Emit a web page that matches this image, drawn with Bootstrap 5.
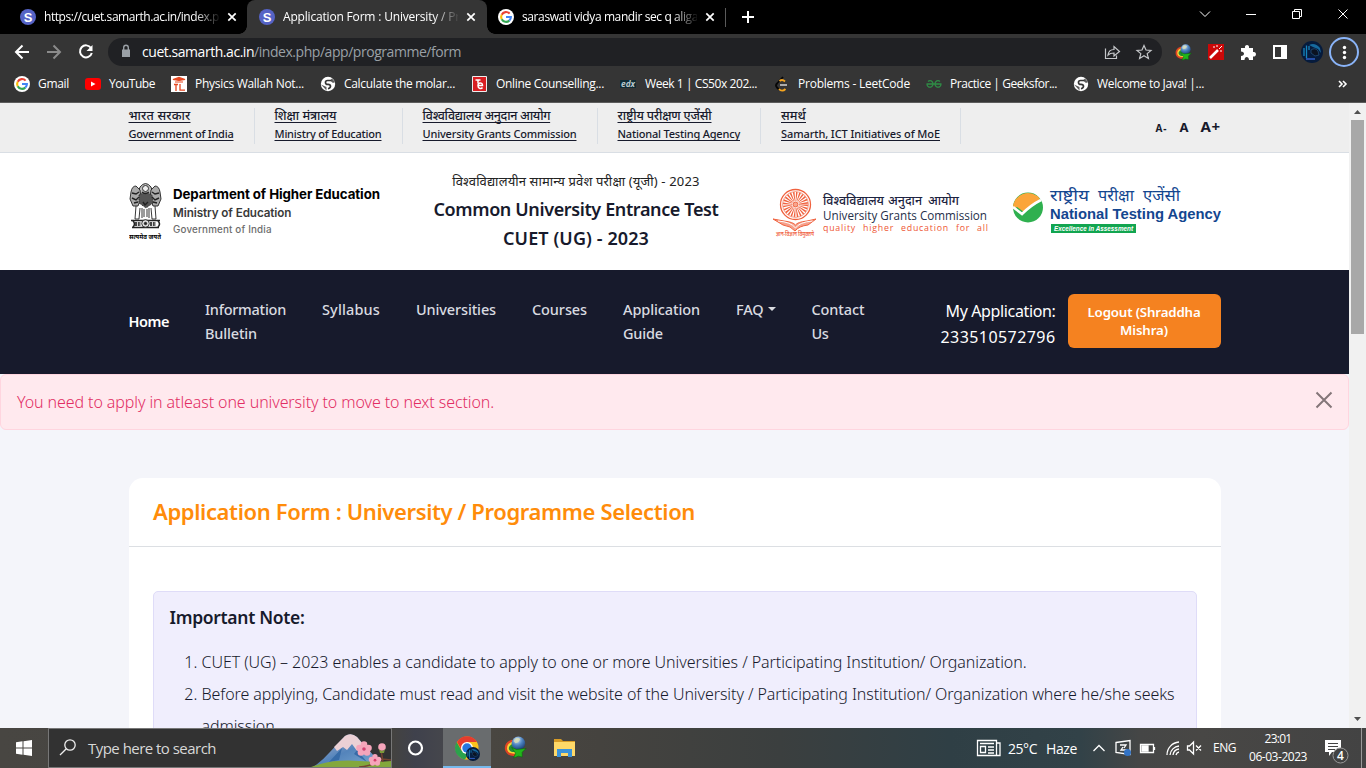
<!DOCTYPE html>
<html lang="en">
<head>
<meta charset="utf-8">
<meta name="viewport" content="width=device-width, initial-scale=1">
<title>Application Form : University / Programme Selection</title>
<link rel="stylesheet" href="https://cdn.jsdelivr.net/npm/bootstrap@5.3.0/dist/css/bootstrap.min.css">
<style>
html,body{height:100%;overflow:hidden}
body{width:1366px;height:768px;font-family:"Noto Sans","Open Sans",sans-serif;color:#171a2c;background:#f4f5fa}
svg{display:block;flex:none}
[data-w]{white-space:nowrap;display:inline-block}
/* browser window */
.win{font-family:"Open Sans","Noto Sans",sans-serif;color:#fff;font-size:12px}
.tabs{height:34px;background:#000;padding-left:8px}
.tab{width:239px;height:34px;padding:0 10px 0 12px}
.tab.on{width:240px;background:#353535;border-radius:8px 8px 0 0;position:relative}
.tab.last{width:235px;margin-left:3px;padding:0 0 0 8px}
.tab.on::before,.tab.on::after{content:"";position:absolute;bottom:0;width:8px;height:8px;background:radial-gradient(circle at 0 0,#000 7.5px,#353535 8px)}
.tab.on::before{left:-8px}
.tab.on::after{right:-8px;background:radial-gradient(circle at 100% 0,#000 7.5px,#353535 8px)}
.tab-title{width:175px;margin-left:8px;white-space:nowrap;line-height:20px;-webkit-mask-image:linear-gradient(90deg,#000 150px,transparent 177px);mask-image:linear-gradient(90deg,#000 150px,transparent 177px)}
.tools{height:36px;background:#353535;padding-left:14px}
.omni{width:1054px;height:28px;border-radius:14px;background:#202124;margin-left:14px;padding:0 4px 2px 10px;font-size:14px}
.omni .rest{color:#9aa0a6}
.marks{height:33px;background:#353535;border-bottom:1px solid #5c5c5c;padding:0 0 4px 14px}
.mk{height:16px;line-height:16px}
/* page */
.page{height:625px;background:#f4f5fa;overflow:hidden}
.wrap{width:1092px;margin-left:128.5px}
.gov{height:50px;background:#eee;border-bottom:1px solid #d9dee4;font-weight:500}
.gov-item{height:36px;margin-top:5px;border-right:1px solid #d9dee4;padding:0 20px;line-height:18px;font-size:11px}
.gov-item:first-child{padding-left:0}
.gov-item a{color:#171a2c;text-decoration:underline;text-underline-offset:2px;text-decoration-skip-ink:none}
.gov-item .hi{font-size:12.5px;line-height:15px}
.gov-item .en{line-height:21px}
.sizer{gap:12px}
.sizer .s1{font-size:10px}
.sizer .s2{font-size:13px}
.sizer .s3{font-size:15px}
.hdr{height:117px;background:#fff}
.exam{width:286px;margin-left:52.5px;padding-top:14px;line-height:29px;font-weight:600;font-size:18px}
.exam .hi{font-size:13px;font-weight:400;line-height:28px;color:#222}
.main-nav{height:104px;background:#171a2c;padding-bottom:2px}
.main-nav .menu{font-size:14.5px;line-height:24px;font-weight:500;color:#d9dbe0;gap:36px}
.main-nav .dropdown-toggle::after{margin:10px 0 0 4px}
.app-no{width:120px;font-size:16px;line-height:26px;color:#fff;padding-top:5px}
.logout{width:153px;height:54px;margin-left:12px;background:#f58220;border-radius:6px;color:#fff;font-size:13.3px;font-weight:600;line-height:18px}
.alert-pink{height:56px;background:#ffe9ee;border:1px solid #ffd5df;border-radius:6px;color:#e22d63;font-weight:300;padding:15px 16px;font-size:16px;line-height:25px}
.form-card{margin-top:48px;background:#fff;border-radius:14px 14px 0 0;height:300px}
.form-head{height:69px;border-bottom:1px solid #dcdfe3;padding:17px 24.5px;color:#ff8c0a;font-size:22px;font-weight:600;line-height:33px}
.note{margin:44px 24px 0;height:300px;background:#f0eefd;border:1px solid #dfdcf8;border-radius:5px;padding:11px 16px}
.note h2{font-size:17.5px;font-weight:600;line-height:28px;margin:0 0 15px}
.note ol{font-size:16px;line-height:32px;font-weight:300;padding-left:32px;margin:0}
.sb{width:17px;height:625px;background:#f1f1f1}
.thumb{width:13px;height:214px;background:#a8a8a8}
/* taskbar */
.task{height:40px;color:#fff;font-family:"Open Sans","Noto Sans",sans-serif;background:linear-gradient(90deg,#484642 0,#444340 392px,#3f414c 415px,#45464c 442px,#494641 491px,#45433f 600px,#3b3f3f 780px,#2f3f45 950px,#324248 1080px,#454646 1140px,#484745 1200px,#434343 1366px)}
.start{width:48px;padding-left:16px}
.find{width:344px;height:40px;background:#323232;border:1px solid #777;font-size:15px;color:#d8d8d8}
.find span{margin-left:7px}
.ring{width:51px;padding-left:15px}
.task-on{width:48px;height:40px;background:#696c6e;border-bottom:2px solid #76b9ed}
.weather{font-size:14px;margin-left:6px;width:73px;gap:9px}
.lang{font-size:12px;margin-left:8px}
.clock{font-size:12px;line-height:18px;width:60px;margin-left:12px}
</style>
</head>
<body>
<svg width="0" height="0" class="position-absolute">
 <defs>
  <radialGradient id="orb" cx=".4" cy=".25" r=".8"><stop stop-color="#cfe4f8"/><stop offset=".5" stop-color="#4c82c0"/><stop offset="1" stop-color="#173a72"/></radialGradient>
  <symbol id="sam" viewBox="0 0 16 16"><circle cx="8" cy="8" r="8" fill="#5563c6"/><text x="8" y="12.6" text-anchor="middle" font-family="Liberation Sans" font-weight="700" font-size="13" fill="#fff">S</text></symbol>
  <symbol id="goo" viewBox="0 0 16 16"><circle cx="8" cy="8" r="8" fill="#fff"/><g fill="none" stroke-width="2.1"><path d="M11.6 4.6A4.9 4.9 0 0 0 3.7 5.7" stroke="#ea4335"/><path d="M3.7 5.7a4.9 4.9 0 0 0 0 4.6" stroke="#fbbc05"/><path d="M3.7 10.3a4.9 4.9 0 0 0 7.6 1.3" stroke="#34a853"/><path d="M11.3 11.6A4.7 4.7 0 0 0 12.9 8H8" stroke="#4285f4"/></g></symbol>
  <symbol id="x" viewBox="0 0 10 10"><path d="M1.3 1.3l7.4 7.4M8.7 1.3L1.3 8.7" stroke="#fff" stroke-width="1.7"/></symbol>
  <symbol id="globe" viewBox="0 0 16 16"><circle cx="8" cy="8" r="7.2" fill="#fff"/><path d="M11.5 4.5H7.5Q5.5 4.5 5.5 6.5T8 8.3q2.5.2 2.5 2T8 12.8" stroke="#353535" stroke-width="1.7" fill="none"/><path d="M1 8.5l5.5 2.5v3.5zM12 2.5l-2 2 3 2.5 2-1z" fill="#353535" opacity=".8"/></symbol>
  <symbol id="idm" viewBox="0 0 24 24"><path d="M9 4C1 5-2 14 4 19c4 3 10 2 13-1l-6-4z" fill="#df4423"/><path d="M9 6C4 7 1 13 5 17c3 2 8 2 10 0z" fill="#f4d438"/><path d="M9 8c-4 2-5 5-3 7 2 3 8 2 10-1z" fill="#238c38"/><circle cx="15" cy="7.5" r="7" fill="url(#orb)"/><path d="M11 3.5c2-2 5-1.5 6 0l-2 3-3 1-2-2z" fill="#d9deb4" opacity=".8"/><path d="M8 12l5 2 10-1-4 4 0 5-4-1-5 2 2-5z" fill="#22b51b" stroke="#08670c" stroke-width=".6"/></symbol>
  <symbol id="ava" viewBox="0 0 22 22"><circle cx="11" cy="11" r="11" fill="#061b3c"/><path d="M3 15V7M5.5 17V4.5M8 5v4" stroke="#1586bf" stroke-width="1.3" fill="none"/><path d="M8 4q6-3 11 3l1 5-3-4-5-2z" fill="#166a9e"/><path d="M10 9q4-3 7 1l1 4-4 1-4-3z" fill="#0b1322" stroke="#2a5f90" stroke-width=".6"/><path d="M5 18h9" stroke="#2b55b4" stroke-width="1.8"/></symbol>
 </defs>
</svg>

<div class="d-flex flex-column">
<header class="win">
 <div class="tabs d-flex align-items-center">
  <div class="tab d-flex align-items-center"><svg width="16" height="16"><use href="#sam"/></svg><div class="tab-title"><span data-w="175">https://cuet.samarth.ac.in/index.p</span></div><svg class="ms-2" width="10" height="10"><use href="#x"/></svg></div>
  <div class="tab on d-flex align-items-center"><svg width="16" height="16"><use href="#sam"/></svg><div class="tab-title"><span data-w="177">Application Form : University / Pr</span></div><svg class="ms-2" width="10" height="10"><use href="#x"/></svg></div>
  <div class="tab last d-flex align-items-center"><svg width="16" height="16"><use href="#goo"/></svg><div class="tab-title"><span data-w="176">saraswati vidya mandir sec q aliga</span></div><svg class="ms-2" width="10" height="10"><use href="#x"/></svg></div>
  <svg width="40" height="34" viewBox="725 0 40 34" fill="none"><path d="M725.5 8v19" stroke="#5a5a5a"/><path d="M742 17h12M748 11v12" stroke="#fff" stroke-width="2"/></svg>
  <svg class="ms-auto" width="176" height="34" viewBox="1190 0 176 34" fill="none" stroke="#fff"><path d="M1200 11.5l5 5 5-5M1246 14.5h10M1292.5 11.5h7v7h-7zM1294.5 11.5v-2h7v7h-2M1338.5 9.5l9 9M1347.5 9.5l-9 9"/></svg>
 </div>
 <div class="tools d-flex align-items-center">
  <svg width="80" height="36" viewBox="14 34 80 36" fill="none" stroke-width="2"><path d="M29 52H16M22.5 45.5L16 52l6.5 6.5" stroke="#fff"/><path d="M47 52h13M53.5 45.5L60 52l-6.5 6.5" stroke="#8b8b8b"/><path d="M91 48a6 6 0 1 0 .8 5" stroke="#fff"/><path d="M92.5 45v6h-6z" fill="#fff"/></svg>
  <div class="omni d-flex align-items-center">
   <svg width="16" height="16" viewBox="0 0 16 16"><path d="M4 6.5h8V14H4z" fill="#9aa0a6"/><path d="M5.7 7V4.5a2.3 2.3 0 0 1 4.6 0V7" fill="none" stroke="#9aa0a6" stroke-width="1.4"/></svg>
   <span class="ms-2" data-w="319">cuet.samarth.ac.in<span class="rest">/index.php/app/programme/form</span></span>
   <svg class="ms-auto" width="56" height="26" viewBox="1102 38 56 26" fill="none" stroke="#c5c7ca" stroke-width="1.2"><path d="M1105.5 48.5v10h11v-3"/><path d="M1108 55c.5-4 2.5-5.5 6-5.5v-3l5.5 5-5.5 4.5v-3c-3 0-4.5.5-6 2z"/><path d="M1144 45.5l2 4.5 5 .4-3.8 3.2 1.2 4.8-4.4-2.6-4.4 2.6 1.2-4.8-3.8-3.2 5-.4z"/></svg>
  </div>
  <svg width="204" height="36" viewBox="1162 34 204 36"><use href="#idm" x="1175" y="44" width="17" height="17"/><rect x="1208" y="44" width="16" height="16" fill="#cb0808"/><path d="M1210 58l8-8" stroke="#fff" stroke-width="2.5"/><path d="M1219 49l2-2M1214 46v2M1222 51h-2M1217 45v2M1222 46l-1 1" stroke="#fff"/><path d="M1241 48h4c-1-4 5-4 4 0h4v4c4-1 4 5 0 4.5V60h-4c0-4-4.5-4-4.5 0h-3.5v-4c4 0 4-4.5 0-4.5z" fill="#fff"/><path d="M1274 46h12v12h-12z" fill="none" stroke="#fff" stroke-width="2"/><path d="M1281 46h5v12h-5z" fill="#fff"/><use href="#ava" x="1301" y="41" width="22" height="22"/><circle cx="1344" cy="52" r="14" fill="none" stroke="#8ab4f8" stroke-width="2"/><g fill="#fff"><circle cx="1344.5" cy="47.5" r="1.7"/><circle cx="1344.5" cy="52.5" r="1.7"/><circle cx="1344.5" cy="57.5" r="1.7"/></g></svg>
 </div>
 <div class="marks d-flex align-items-center">
  <div class="mk d-flex gap-2 me-3"><svg width="16" height="16"><use href="#goo"/></svg><span data-w="31">Gmail</span></div>
  <div class="mk d-flex gap-2 me-3"><svg width="16" height="16"><rect y="2" width="16" height="12" rx="3" fill="#f00"/><path d="M6 5.5v5l4.5-2.5z" fill="#fff"/></svg><span data-w="46">YouTube</span></div>
  <div class="mk d-flex gap-2 me-3"><svg width="16" height="16"><path fill="#fff" d="M0 0h16v16H0z"/><path d="M2 3.5l6-2 6 2-6 1zM4 6h8" stroke="#e54720" stroke-width="1.2" fill="#e54720"/><path d="M3 8.5h4M5 8.5V15M9 8v6.2h5" stroke="#e54720" stroke-width="1.3" fill="none"/></svg><span data-w="109">Physics Wallah Not...</span></div>
  <div class="mk d-flex gap-2 me-3"><svg width="16" height="16"><use href="#globe"/></svg><span data-w="111">Calculate the molar...</span></div>
  <div class="mk d-flex gap-2 me-3"><svg width="17" height="16"><path fill="#d91e22" stroke="#eee" d="M1.5.5h14v15h-14z"/><path d="M4.500 4h5M7 4v3.500" stroke="#fff" stroke-width="1.5" fill="none"/><path d="M6.500 9.500h5c0-3.5-4.5-3.5-4.5.2 0 3.3 3.5 3.3 4.500 1.8" stroke="#fff" stroke-width="1.5" fill="none"/></svg><span data-w="108">Online Counselling...</span></div>
  <div class="mk d-flex gap-2 me-3"><svg width="17" height="16"><path fill="#102b35" d="M0 4h16v8H0z"/><text x="1" y="11" font-family="Open Sans" font-size="9" font-weight="700" font-style="italic" fill="#b9c8cd" textLength="14" lengthAdjust="spacingAndGlyphs">edx</text></svg><span data-w="112">Week 1 | CS50x 202...</span></div>
  <div class="mk d-flex gap-2 me-3"><svg width="17" height="16" fill="none" stroke-width="1.8"><path d="M10 1L4 7.5c-1.5 1.5-1 3 0 4l2 2" stroke="#070707"/><path d="M6.5 5c2-1.5 3.5-1.5 5.5.5M6 13c2 2.5 4.5 2 6.5 0" stroke="#f6a51f"/><path d="M7 9h7" stroke="#bbb"/></svg><span data-w="112">Problems - LeetCode</span></div>
  <div class="mk d-flex gap-2 me-3"><svg width="16" height="16" fill="none" stroke="#2f8d46" stroke-width="1.3"><path d="M.5 8h15M2 5.5c2-2 5-.5 5 2.3 0 2.7-2.5 4-4.5 3C1 10.2 1 9 1 8M14 5.5c-2-2-5-.5-5 2.3 0 2.7 2.5 4 4.5 3 1.5-.6 1.5-1.8 1.500-2.8"/></svg><span data-w="107">Practice | Geeksfor...</span></div>
  <div class="mk d-flex gap-2"><svg width="16" height="16"><use href="#globe"/></svg><span data-w="107">Welcome to Java! |...</span></div>
  <svg class="ms-auto me-3" width="14" height="10" viewBox="0 0 14 10" fill="none" stroke="#fff" stroke-width="1.6"><path d="M3 2l3 3-3 3M7 2l3 3-3 3"/></svg>
 </div>
</header>

<div class="d-flex">
<main class="page flex-grow-1">
 <div class="gov"><div class="wrap d-flex">
  <div class="gov-item d-flex flex-column align-items-start"><a class="hi" data-w="62">भारत सरकार</a><a class="en" data-w="105">Government of India</a></div>
  <div class="gov-item d-flex flex-column align-items-start"><a class="hi" data-w="62">शिक्षा मंत्रालय</a><a class="en" data-w="107">Ministry of Education</a></div>
  <div class="gov-item d-flex flex-column align-items-start"><a class="hi" data-w="128">विश्वविद्यालय अनुदान आयोग</a><a class="en" data-w="154">University Grants Commission</a></div>
  <div class="gov-item d-flex flex-column align-items-start"><a class="hi" data-w="94">राष्ट्रीय परीक्षण एजेंसी</a><a class="en" data-w="122.5">National Testing Agency</a></div>
  <div class="gov-item d-flex flex-column align-items-start"><a class="hi" data-w="25">समर्थ</a><a class="en" data-w="159">Samarth, ICT Initiatives of MoE</a></div>
  <div class="sizer ms-auto d-flex align-items-baseline fw-bold mt-2 pt-1"><span class="s1" data-w="12">A-</span><span class="s2" data-w="9">A</span><span class="s3" data-w="20">A+</span></div>
 </div></div>
 <div class="hdr"><div class="wrap d-flex">
  <svg width="252" height="117" viewBox="129 153 252 117" font-family="Inter">
   <g fill="none" stroke="#222" stroke-width=".9">
    <path d="M140 187q5.5-7 11 0l2 6-2 8h-11l-2-8z" fill="#bbb"/><circle cx="145.5" cy="188.5" r="3" fill="#eee"/>
    <path d="M131 192q1-6 5-6l4 4 1 8-3 8h-5l-3-7zM160 192q-1-6-5-6l-4 4-1 8 3 8h5l3-7z" fill="#aaa"/>
    <path d="M139 195q6-4 13 0l1 8-7 5-7-5z" fill="#555" stroke-dasharray="1 1"/>
    <path d="M132 193l4 1 3-2M132 198l4 2 3-3M159 193l-4 1-3-2M159 198l-4 2-3-3M142 192q3 3 7 0M134 203l4-1M157 203l-4-1M143 202l2 3 3-3" stroke-width="1.4"/>
    <path d="M136 206l-1 13h4l1-11M155 206l1 13h-4l-1-11M142 208v10M144 209v8M147 209v8M149 208v10"/>
    <path d="M131 220.5h29M132 227.5h27M133 221q3 3 0 6M158 221q3 3 0 6" stroke-width="1.5"/><path d="M135 224h6M150 224h6" stroke-width="4" stroke-dasharray="2 .8" stroke="#444"/><circle cx="145.5" cy="223.5" r="3.8" fill="#ddd"/><circle cx="145.5" cy="223.5" r="1.2" fill="#222"/>
   </g>
   <text x="129" y="239" font-family="Noto Sans,sans-serif" font-size="6.5" font-weight="700" textLength="32" lengthAdjust="spacingAndGlyphs">सत्यमेव जयते</text>
   <text x="173" y="199" font-size="13.3" font-weight="700" fill="#000" textLength="207">Department of Higher Education</text>
   <text x="173" y="217" font-size="11.7" font-weight="600" fill="#3a3a3a" textLength="118.5">Ministry of Education</text>
   <text x="173" y="233" font-size="9.8" font-weight="500" fill="#6c6c6c" textLength="98.5">Government of India</text>
  </svg>
  <div class="exam text-center d-flex flex-column align-items-center">
   <span class="hi" data-w="247">विश्वविद्यालयीन सामान्य प्रवेश परीक्षा (यूजी) - 2023</span>
   <span data-w="285">Common University Entrance Test</span><span data-w="146">CUET (UG) - 2023</span>
  </div>
  <svg class="ms-auto" width="449" height="117" viewBox="772 153 449 117">
   <g fill="none" stroke="#f0623f"><circle cx="795.5" cy="204.5" r="15" stroke-width="1.3"/><circle cx="795.5" cy="204.5" r="13" stroke-width=".6"/><circle cx="795.5" cy="204.5" r="8" stroke-width="9" stroke-dasharray="1.1 1"/><circle cx="795.5" cy="204.5" r="2.5" fill="#f7a58d"/><path d="M773 219l11 2q9 1 11.5 4 2-3 11.5-4l9-2-8 6q-9 1-13 6-4-5-12-6z" fill="#f0623f" fill-opacity=".6"/><path d="M778 221q13 1 17.5 7 4-6 17-7" stroke="#fff"/></g>
   <text x="776" y="236" font-family="Noto Sans,sans-serif" font-size="5.5" font-weight="600" fill="#f0623f" textLength="38" lengthAdjust="spacingAndGlyphs">ज्ञान-विज्ञान विमुक्तये</text>
   <g font-family="Noto Sans,sans-serif" font-size="12" font-weight="500" fill="#1c2340"><text x="823" y="205" textLength="61" lengthAdjust="spacingAndGlyphs">विश्वविद्यालय</text><text x="888" y="205" textLength="34" lengthAdjust="spacingAndGlyphs">अनुदान</text><text x="928" y="205" textLength="31" lengthAdjust="spacingAndGlyphs">आयोग</text></g>
   <text x="823" y="220" font-family="Open Sans" font-size="12.8" font-weight="500" fill="#26304a" textLength="164" lengthAdjust="spacingAndGlyphs">University Grants Commission</text>
   <text x="823" y="231" font-family="Open Sans" font-size="8.8" font-weight="500" fill="#ee5634" word-spacing="4" textLength="165">quality higher education for all</text>
   <circle cx="1028" cy="207.5" r="15" fill="#2fb04f"/><path d="M1013 209a15 15 0 0 1 27-10l-16 13-7-5z" fill="#fba53a"/><path d="M1013 207l9 7q9-9 19-14" fill="none" stroke="#fff" stroke-width="2.6"/>
   <g font-family="Noto Sans,sans-serif" font-size="16" fill="#13468f"><text x="1050" y="201" textLength="39" lengthAdjust="spacingAndGlyphs">राष्ट्रीय</text><text x="1098" y="201" textLength="36" lengthAdjust="spacingAndGlyphs">परीक्षा</text><text x="1143" y="201" textLength="37" lengthAdjust="spacingAndGlyphs">एजेंसी</text></g>
   <text x="1050" y="219" font-family="Liberation Sans" font-size="14.8" font-weight="700" fill="#13468f" textLength="171" lengthAdjust="spacingAndGlyphs">National Testing Agency</text>
   <path fill="#12a550" d="M1051 224h85v9h-85z"/><text x="1054" y="231" font-family="Liberation Sans" font-size="6.3" font-weight="700" font-style="italic" fill="#fff" textLength="79">Excellence in Assessment</text>
  </svg>
 </div></div>
 <nav class="main-nav"><div class="wrap d-flex h-100 align-items-center">
  <div class="menu d-flex">
   <span class="align-self-center fw-semibold text-white" data-w="40.5">Home</span>
   <div class="d-flex flex-column align-items-start"><span data-w="81">Information</span><span data-w="52">Bulletin</span></div>
   <span data-w="58">Syllabus</span><span data-w="80">Universities</span><span data-w="55">Courses</span>
   <div class="d-flex flex-column align-items-start"><span data-w="77">Application</span><span data-w="40">Guide</span></div>
   <div class="dropdown-toggle d-flex align-items-start"><span data-w="27.5">FAQ</span></div>
   <div class="d-flex flex-column align-items-start"><span data-w="53">Contact</span><span data-w="17">Us</span></div>
  </div>
  <div class="app-no ms-auto d-flex flex-column align-items-end"><span data-w="110">My Application:</span><span data-w="115">233510572796</span></div>
  <div class="logout d-flex flex-column align-items-center justify-content-center"><span data-w="113">Logout (Shraddha</span><span data-w="48">Mishra)</span></div>
 </div></nav>
 <div class="alert-pink d-flex justify-content-between"><span data-w="477">You need to apply in atleast one university to move to next section.</span><svg width="16" height="18" viewBox="0 -2 16 18" stroke="#847679" stroke-width="2" overflow="visible"><path d="M.5.5l15 15M15.5.5l-15 15"/></svg></div>
 <section class="form-card wrap">
  <div class="form-head"><span data-w="542">Application Form : University / Programme Selection</span></div>
  <div class="note"><h2><span data-w="135">Important Note:</span></h2>
   <ol><li><span data-w="825">CUET (UG) – 2023 enables a candidate to apply to one or more Universities / Participating Institution/ Organization.</span></li>
   <li><span data-w="973">Before applying, Candidate must read and visit the website of the University / Participating Institution/ Organization where he/she seeks</span><br><span data-w="77">admission.</span></li></ol></div>
 </section>
</main>
<div class="sb d-flex flex-column align-items-center">
 <svg width="17" height="17"><path d="M5 11l3.5-4L12 11z" fill="#505050"/></svg><div class="thumb"></div><svg class="mt-auto" width="17" height="17"><path d="M5 6l3.5 4L12 6z" fill="#505050"/></svg>
</div>
</div>

<footer class="task d-flex align-items-center">
 <div class="start"><svg width="16" height="16"><path fill="#fff" d="M0 2.3l6.5-1V7.5H0zM7.5 1.2L16 0v7.5H7.5zM0 8.5h6.5v6.2L0 13.8zM7.5 8.5H16V16l-8.5-1.2z"/></svg></div>
 <div class="find d-flex align-items-center">
  <svg class="ms-2" width="24" height="24" fill="none" stroke="#eee" stroke-width="1.3"><circle cx="13" cy="9" r="5.2"/><path d="M9.3 12.7L3 19"/></svg>
  <span data-w="128">Type here to search</span>
  <svg class="ms-auto" width="80" height="38" viewBox="312 729 80 38">
   <defs><linearGradient id="mt" x2="1" y2="1"><stop stop-color="#b9b7d1"/><stop offset=".5" stop-color="#5484bb"/><stop offset="1" stop-color="#7facd3"/></linearGradient></defs>
   <path d="M314 767q9-6 16-14l16-17q6-4 12 1l27 30z" fill="url(#mt)"/><path d="M335 747l11-11q6-4 12 1l10 12-6-2-4 4-5-7-5 6-4-3-6 4z" fill="#ebd0d5"/><path d="M330 762l13-14-3 12zM358 750l10 12-13-8z" fill="#376ba8"/><path d="M312 767q20-8 48-6 20 1 32 0v6z" fill="#83a83c"/>
   <path d="M360 767q15-1 23-8l9 1M382 750l2 12" stroke="#764331" stroke-width="1.5" fill="none"/>
   <g fill="#f6a5bb"><g id="bl"><circle cx="365" cy="744.500" r="3.300"/><circle cx="369.500" cy="748" r="3.300"/><circle cx="368" cy="752.500" r="3.300"/><circle cx="362" cy="752.500" r="3.300"/><circle cx="360.500" cy="748" r="3.300"/><circle cx="365" cy="749" r="1.7" fill="#d93f6e"/></g><use href="#bl" transform="translate(84 161) scale(.8)"/><circle cx="383" cy="747" r="3.8"/><path d="M380 749q3 4 6 0l-1 4h-4z" fill="#7c9a3a"/></g>
  </svg>
 </div>
 <div class="ring"><svg width="18" height="18"><circle cx="8.5" cy="9" r="6.5" fill="none" stroke="#fff" stroke-width="2.2"/></svg></div>
 <div class="task-on d-flex justify-content-center align-items-center"><svg class="mt-1" width="28" height="28" viewBox="-1 0 28 28"><circle cx="13" cy="13" r="11.5" fill="#fbc21d"/><path d="M3 7a11.5 11.5 0 0 1 20 0H13z" fill="#e63c2e"/><path d="M2.7 7a11.5 11.5 0 0 0 8.3 17.4l4-7-7.5-2z" fill="#2ba24c"/><path d="M3 7l5 9 5-9z" fill="#e63c2e"/><circle cx="13" cy="13" r="6" fill="#fff"/><circle cx="13" cy="13" r="4.7" fill="#2676df"/><use href="#ava" x="12" y="12" width="14" height="14"/></svg></div>
 <svg class="ms-2" width="90" height="40" viewBox="499 728 90 40"><use href="#idm" x="504" y="736" width="23" height="23"/><path d="M554 739h7l2 2h12v15h-21z" fill="#d89c26"/><path d="M554 742h21v14h-21z" fill="#ffd968"/><path d="M557 757v-8h15v8h-4v-4h-7v4z" fill="#3b93da"/></svg>
 <svg class="ms-auto" width="26" height="24" viewBox="975 736 26 24" fill="none" stroke="#fff" stroke-width="1.3"><path d="M976.5 740.5h19v15h-19zM996 743h3v12.5h-5M979 743.5h14M979.5 746.5h5v6h-5zM987 747h6M987 750h6M987 753h6"/></svg>
 <div class="weather d-flex align-items-center"><span data-w="29">25°C</span><span data-w="31">Haze</span></div>
 <svg width="124" height="40" viewBox="1081 728 124 40" fill="none" stroke="#fff" stroke-width="1.3"><path d="M1093.5 751l5.5-5.5 5.5 5.5"/><path d="M1116 742.5l14-2v14l-14-2zM1120 745h6l-2 3M1127 750h-6l2-3"/><circle cx="1127.5" cy="752.5" r="3.5" fill="#3273c5" stroke="none"/><path d="M1140.5 744.5h13v8h-13zM1154.5 747v3"/><path d="M1142 746h6v5h-6z" fill="#fff"/><path d="M1167 755a13 13 0 0 1 12-13M1170 755a10 10 0 0 1 9-9M1173 755a7 7 0 0 1 6-6M1176 755a4 4 0 0 1 3-3"/><path d="M1187.5 746h2l4-4v12l-4-4h-2zM1196 745.5l5 5M1201 745.5l-5 5"/></svg>
 <span class="lang" data-w="23">ENG</span>
 <div class="clock d-flex flex-column align-items-center"><span data-w="27">23:01</span><span data-w="58">06-03-2023</span></div>
 <svg width="58" height="40" viewBox="1308 728 58 40"><path d="M1325 740h16v12h-9l-3 4v-4h-4z" fill="#fff"/><path d="M1328 743.5h10M1328 746.5h10M1328 749.5h7" stroke="#444"/><circle cx="1340.5" cy="755.5" r="7.5" fill="#424242" stroke="#999"/><text x="1340.5" y="759.8" text-anchor="middle" font-family="Open Sans" font-size="12" font-weight="600" fill="#fff">4</text><path d="M1361.5 728v40" stroke="#999"/></svg>
</footer>
</div>
<script src="https://cdn.jsdelivr.net/npm/bootstrap@5.3.0/dist/js/bootstrap.bundle.min.js"></script>
<script>
// Tracks each label to its data-w width.
document.querySelectorAll('[data-w]').forEach(el => {
  const w = +el.dataset.w, n = [...new Intl.Segmenter('hi').segment(el.textContent)].length;
  el.style.letterSpacing = (w - el.getBoundingClientRect().width) / n + 'px';
});
</script>
</body>
</html>
